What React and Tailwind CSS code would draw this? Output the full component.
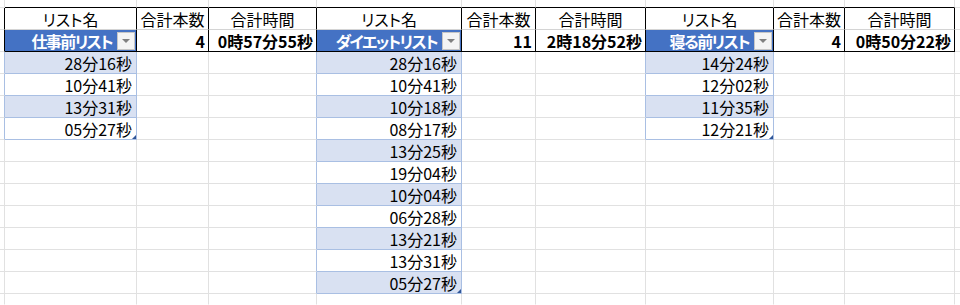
import React from 'react';

const tables = [
  {
    name: '仕事前リスト',
    count: 4,
    total: '0時57分55秒',
    items: ['28分16秒', '10分41秒', '13分31秒', '05分27秒'],
  },
  {
    name: 'ダイエットリスト',
    count: 11,
    total: '2時18分52秒',
    items: [
      '28分16秒', '10分41秒', '10分18秒', '08分17秒', '13分25秒', '19分04秒',
      '10分04秒', '06分28秒', '13分21秒', '13分31秒', '05分27秒',
    ],
  },
  {
    name: '寝る前リスト',
    count: 4,
    total: '0時50分22秒',
    items: ['14分24秒', '12分02秒', '11分35秒', '12分21秒'],
  },
];

const ROWS = 15;

const RIGHT = {
  black: 'border-r-black',
  gray: 'border-r-[#e1e1e1]',
  blue: 'border-r-[#a9bfe3]',
};
const BOTTOM = {
  black: 'border-b-black',
  gray: 'border-b-[#e1e1e1]',
  blue: 'border-b-[#a9bfe3]',
  light: 'border-b-[#d4d4d4]',
  none: 'border-b-transparent',
};

const hasItem = (t, r) => r >= 3 && r - 3 < tables[t].items.length;

function Cell({ right, bottom, className = '', children }) {
  return (
    <div className={`relative box-border border-r border-b ${RIGHT[right]} ${BOTTOM[bottom]} ${className}`}>
      {children}
    </div>
  );
}

function Dropdown() {
  return (
    <div className="ml-[5px] mr-[1px] w-[18px] h-[18px] shrink-0 bg-[#f4f4f4] border border-[#c6c6c6] flex items-center justify-center">
      <div className="w-0 h-0 border-l-[4px] border-r-[4px] border-t-[4px] border-l-transparent border-r-transparent border-t-[#808080]" />
    </div>
  );
}

function rightOf(t, c, r) {
  if (r === 0 || r === 14) return 'gray';
  if (r === 1 || r === 2) return 'black';
  if (c === 0 && hasItem(t, r)) return 'blue';
  if (c === 2 && t < 2 && hasItem(t + 1, r)) return 'blue';
  return 'gray';
}

function bottomOf(t, c, r) {
  if (r === 0) return 'black';
  if (r === 1) return 'light';
  if (r === 2) return 'black';
  if (r === 14) return 'none';
  if (c === 0 && hasItem(t, r)) return 'blue';
  return 'gray';
}

function cellContent(t, c, r) {
  const tb = tables[t];
  if (r === 1) {
    const label = ['リスト名', '合計本数', '合計時間'][c];
    return { className: 'flex items-center justify-center', children: label };
  }
  if (r === 2) {
    if (c === 0) {
      return {
        className: 'flex items-center justify-end bg-[#4472c4] text-white font-bold',
        children: (
          <>
            <span className="tracking-[-1.6px]">{tb.name}</span>
            <Dropdown />
          </>
        ),
      };
    }
    return {
      className: 'flex items-center justify-end pr-[3px] font-bold',
      children: c === 1 ? tb.count : tb.total,
    };
  }
  if (c === 0 && hasItem(t, r)) {
    const i = r - 3;
    const last = i === tb.items.length - 1;
    return {
      className: `flex items-center justify-end pr-[4px] ${i % 2 === 0 ? 'bg-[#d9e1f2]' : 'bg-white'}`,
      children: (
        <>
          {tb.items[i]}
          {last && (
            <div className="absolute right-0 bottom-0 w-0 h-0 border-l-[4px] border-l-transparent border-b-[4px] border-b-[#2f5597]" />
          )}
        </>
      ),
    };
  }
  return { className: '', children: null };
}

export default function App() {
  const cells = [];
  for (let r = 0; r < ROWS; r++) {
    let leftRight = 'gray';
    if (r === 1 || r === 2) leftRight = 'black';
    else if (hasItem(0, r)) leftRight = 'blue';
    cells.push(<Cell key={`l${r}`} right={leftRight} bottom={r === 14 ? 'none' : 'gray'} />);

    for (let t = 0; t < 3; t++) {
      for (let c = 0; c < 3; c++) {
        const { className, children } = cellContent(t, c, r);
        cells.push(
          <Cell key={`${r}-${t}-${c}`} right={rightOf(t, c, r)} bottom={bottomOf(t, c, r)} className={className}>
            {children}
          </Cell>
        );
      }
    }

    cells.push(
      <div key={`r${r}`} className={`box-border border-b ${r === 14 ? 'border-b-transparent' : 'border-b-[#e1e1e1]'}`} />
    );
  }

  return (
    <div className="w-[960px] h-[305px] overflow-hidden bg-white text-black text-[16px] leading-[20px] font-['Noto_Sans_CJK_JP','Noto_Sans',sans-serif] [font-feature-settings:'palt']">
      <div className="grid grid-cols-[5px_132px_72px_108px_145px_74px_110px_128px_71px_110px_5px] grid-rows-[8px_22px_22px_repeat(11,22px)_11px] whitespace-nowrap">
        {cells}
      </div>
    </div>
  );
}
